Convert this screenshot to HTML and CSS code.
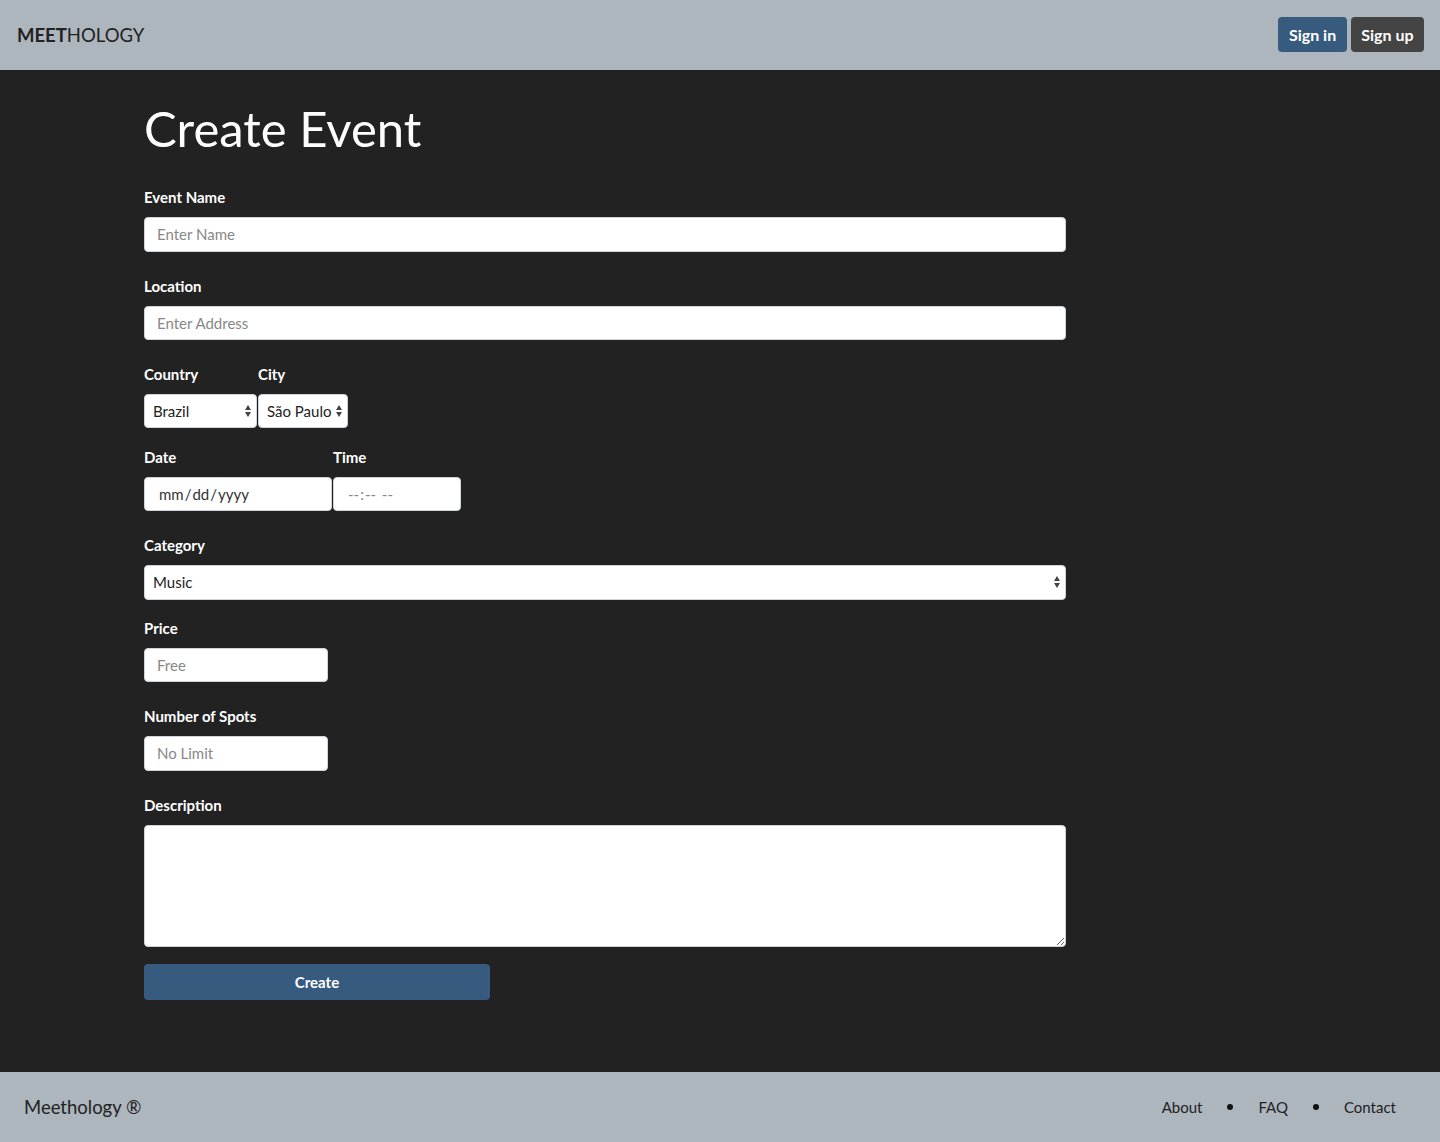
FILE: index.html
```html
<!DOCTYPE html>
<html lang="en">
<head>
<meta charset="utf-8">
<title>Meethology - Create Event</title>
<link rel="stylesheet" href="styles.css">
</head>
<body>
<header class="topbar">
  <div class="brand"><b>MEET</b>HOLOGY</div>
  <nav class="auth">
    <a class="btn btn-primary" href="#">Sign in</a>
    <a class="btn btn-dark" href="#">Sign up</a>
  </nav>
</header>
<main class="content">
  <h1 class="title">Create Event</h1>
  <form class="form">
    <div class="field">
      <label class="label">Event Name</label>
      <input class="input" type="text" placeholder="Enter Name">
    </div>
    <div class="field">
      <label class="label">Location</label>
      <input class="input" type="text" placeholder="Enter Address">
    </div>
    <div class="row row-select">
      <div class="field field-inline">
        <label class="label">Country</label>
        <div class="select-wrap country">
          <select class="select"><option>Brazil</option></select>
          <span class="arrows"></span>
        </div>
      </div>
      <div class="field field-inline">
        <label class="label">City</label>
        <div class="select-wrap city">
          <select class="select"><option>São Paulo</option></select>
          <span class="arrows"></span>
        </div>
      </div>
    </div>
    <div class="row row-date">
      <div class="field field-inline">
        <label class="label">Date</label>
        <input class="input input-date" type="date">
      </div>
      <div class="field field-inline">
        <label class="label">Time</label>
        <input class="input input-time" type="time">
      </div>
    </div>
    <div class="field field-cat">
      <label class="label">Category</label>
      <div class="select-wrap full">
        <select class="select"><option>Music</option></select>
        <span class="arrows"></span>
      </div>
    </div>
    <div class="field">
      <label class="label">Price</label>
      <input class="input input-short" type="text" placeholder="Free">
    </div>
    <div class="field">
      <label class="label">Number of Spots</label>
      <input class="input input-short" type="text" placeholder="No Limit">
    </div>
    <div class="field field-desc">
      <label class="label">Description</label>
      <textarea class="textarea"></textarea>
    </div>
    <button class="submit" type="button">Create</button>
  </form>
</main>
<footer class="footer">
  <div class="copy">Meethology ®</div>
  <nav class="links">
    <a href="#">About</a>
    <span class="dot"></span>
    <a href="#">FAQ</a>
    <span class="dot"></span>
    <a href="#">Contact</a>
  </nav>
</footer>
</body>
</html>
```
FILE: styles.css
```css
* { box-sizing: border-box; }
html, body { margin: 0; padding: 0; }
body {
  font-family: Lato, "Open Sans", "Liberation Sans", sans-serif;
  background: #222222;
  color: #fff;
}
a { text-decoration: none; }

.topbar {
  height: 70px;
  background: #adb5bd;
  display: flex;
  align-items: center;
  justify-content: space-between;
  padding: 0 16px 0 17px;
}
.brand {
  font-size: 18.5px;
  color: #222;
}
.brand b { font-weight: 700; }
.auth { display: flex; gap: 4px; margin-top: -1px; }
.btn {
  display: inline-flex;
  align-items: center;
  justify-content: center;
  height: 35px;
  padding: 0 10.5px;
  border-radius: 4px;
  font-size: 16px;
  font-weight: 700;
  color: #fff;
}
.btn-primary { background: #375a7f; }
.btn-dark { background: #444444; }

.content {
  padding: 29px 0 64px 144px;
  min-height: 1002px;
}
.title {
  margin: 0 0 30px;
  font-size: 49px;
  font-weight: 400;
  line-height: 58px;
}
.form { width: 922px; }
.field { margin-bottom: 24px; }
.label {
  display: block;
  font-size: 15px;
  font-weight: 700;
  line-height: 20px;
  margin-bottom: 10px;
}
.input, .select, .textarea {
  display: block;
  font-family: Lato, "Open Sans", "Liberation Sans", sans-serif;
  font-size: 15px;
  color: #222;
  background: #fff;
  border: 1px solid #ced4da;
  border-radius: 4px;
  outline: none;
}
.input {
  width: 922px;
  height: 34.5px;
  padding: 0 12px;
}
.input::placeholder { color: #888; opacity: 1; }

.row { display: flex; gap: 1px; margin-bottom: 24px; }
.row .field { margin-bottom: 0; }
.row-select { margin-bottom: 19px; }
.row-date { margin-bottom: 23.5px; }

.select-wrap { position: relative; }
.select {
  appearance: none;
  -webkit-appearance: none;
  height: 34px;
  padding: 0 14px 0 8px;
  width: 100%;
}
.country { width: 113px; }
.city { width: 90px; }
.full { width: 922px; }
.full .select { height: 35px; }
.arrows {
  position: absolute;
  right: 5px;
  top: 50%;
  width: 7px;
  height: 12px;
  margin-top: -6px;
  pointer-events: none;
}
.arrows::before, .arrows::after {
  content: "";
  position: absolute;
  left: 0;
  border-left: 3.5px solid transparent;
  border-right: 3.5px solid transparent;
}
.arrows::before { top: 0; border-bottom: 5px solid #444; }
.arrows::after { bottom: 0; border-top: 5px solid #444; }

.input-date { width: 188px; height: 34px; padding-left: 13px; }
.input-time { width: 128px; height: 34px; padding-left: 13px; }
.input-date::-webkit-calendar-picker-indicator,
.input-time::-webkit-calendar-picker-indicator { display: none; }
.input-date::-webkit-datetime-edit { color: #333; }
.input-time::-webkit-datetime-edit { color: #888; }
.input-date::-webkit-datetime-edit-text { padding: 0; }

.field-cat { margin-bottom: 18px; }
.input-short { width: 184px; }

.textarea {
  width: 922px;
  height: 122.5px;
  resize: vertical;
  padding: 8px 12px;
}
.field-desc { margin-bottom: 17px; }

.submit {
  display: block;
  width: 346px;
  height: 36px;
  background: #375a7f;
  border: none;
  border-radius: 4px;
  color: #fff;
  font-family: Lato, "Open Sans", "Liberation Sans", sans-serif;
  font-size: 15px;
  font-weight: 700;
}

.footer {
  height: 70px;
  background: #adb5bd;
  display: flex;
  align-items: center;
  justify-content: space-between;
  padding: 0 44px 0 24px;
  color: #222;
}
.copy { font-size: 18.5px; }
.links { display: flex; align-items: center; gap: 25px; font-size: 15px; }
.links a { color: #222; }
.dot {
  width: 6px;
  height: 6px;
  border-radius: 50%;
  background: #111;
}
```
